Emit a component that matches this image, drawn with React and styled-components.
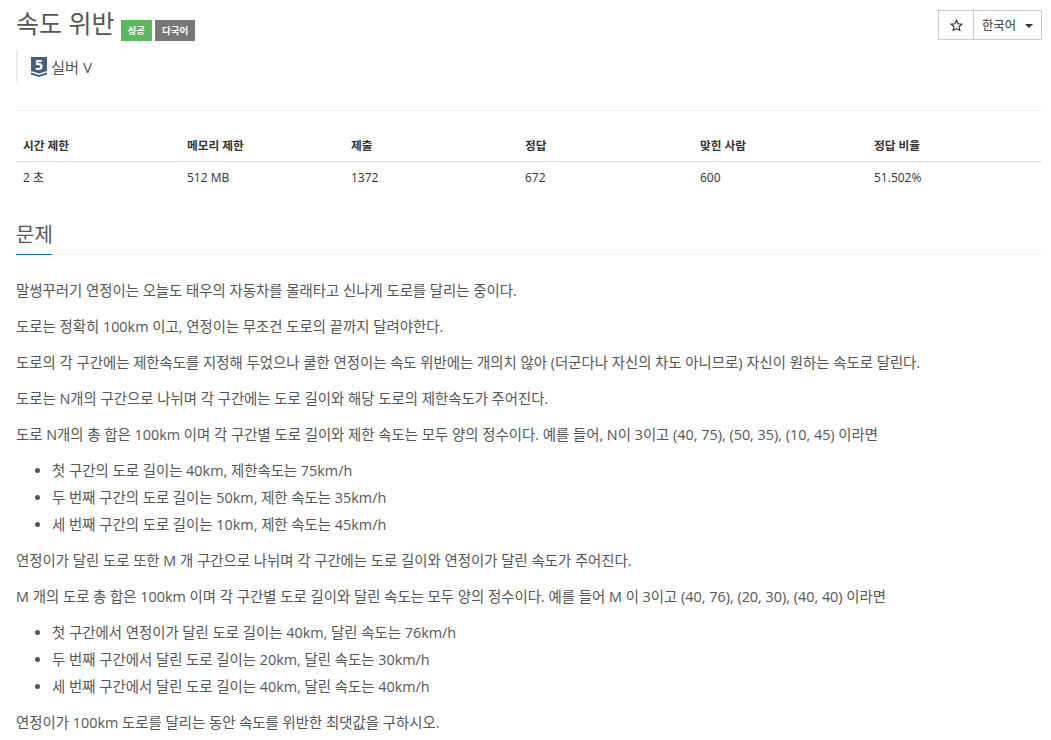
import React from 'react';
import styled, { createGlobalStyle } from 'styled-components';

const Global = createGlobalStyle`
  html, body { margin: 0; padding: 0; background: #fff; height: 740px; overflow: hidden; }
  body { font-family: "Open Sans", "Noto Sans CJK KR", sans-serif; font-size: 13px; color: #333; }
  * { box-sizing: border-box; }
`;
const Page = styled.div`
  padding: 0 9px 0 16px;
  display: flex;
  flex-direction: column;
`;
const Header = styled.header`
  display: flex;
  justify-content: space-between;
  align-items: flex-start;
  height: 111px;
  border-bottom: 1px solid #eee;
`;
const TitleBlock = styled.div`
  display: flex;
  flex-direction: column;
`;
const TitleRow = styled.div`
  display: flex;
  align-items: flex-start;
  height: 50px;
`;
const Title = styled.h1`
  margin: 5px 6px 0 0;
  font-size: 25px;
  line-height: 36px;
  font-weight: 400;
  color: #555;
`;
const Badge = styled.span`
  margin: 20px 3px 0 0;
  height: 21px;
  padding: 0 7px;
  background: ${p => p.$bg};
  color: #fff;
  font-size: 9.5px;
  font-weight: 700;
  line-height: 21px;
`;
const Tier = styled.div`
  display: flex;
  align-items: center;
  gap: 4px;
  height: 34px;
  padding-left: 13px;
  border-left: 2px solid #eee;
  color: #555;
  font-size: 15.3px;
  line-height: 32px;
`;
const Actions = styled.div`
  display: flex;
  margin: 10px 0 0;
  height: 30px;
  border: 1px solid #ccc;
`;
const StarButton = styled.div`
  width: 35px;
  display: flex;
  align-items: center;
  justify-content: center;
  border-right: 1px solid #ccc;
`;
const LangButton = styled.div`
  width: 67px;
  display: flex;
  align-items: center;
  padding-left: 8px;
  gap: 9px;
  font-size: 12.3px;
`;
const Caret = styled.span`
  width: 0;
  height: 0;
  margin-top: 1px;
  border-left: 4px solid transparent;
  border-right: 4px solid transparent;
  border-top: 4px solid #333;
`;
const Stats = styled.table`
  width: 100%;
  margin-top: 17px;
  border-collapse: collapse;
  table-layout: fixed;
  font-size: 11.7px;
`;
const Th = styled.th`
  width: ${p => p.$w}px;
  height: 33px;
  padding: 1px 7px 0;
  text-align: left;
  font-weight: 700;
  color: #333;
  border-bottom: 1px solid #ddd;
`;
const Td = styled.td`
  height: 32px;
  padding: 0 7px;
  font-size: 12px;
`;
const Section = styled.section`
  margin-top: 28px;
`;
const Heading = styled.h2`
  position: relative;
  margin: 0 0 23px;
  height: 34px;
  font-size: 20px;
  line-height: 28px;
  font-weight: 400;
  color: #555;
  border-bottom: 1px dotted #e5e5e5;
  &::after {
    content: "";
    position: absolute;
    left: 0;
    bottom: -1px;
    width: 36px;
    height: 1px;
    background: #0076c0;
  }
`;
const P = styled.p`
  margin: 0 0 10px;
  height: 26px;
  font-size: 14.4px;
  line-height: 26px;
  color: #555;
  white-space: nowrap;
`;
const List = styled.ul`
  margin: -1px 0 10px;
  padding-left: 36px;
`;
const Li = styled.li`
  height: 27px;
  font-size: 14.4px;
  line-height: 27px;
  color: #555;
  white-space: nowrap;
`;

const Shield = () => (
  <svg width="16" height="20" viewBox="0 0 16 20" overflow="visible" aria-hidden="true">
    <path d="M0 0H16V14L8 16.5 0 14Z" fill="#435F7A" />
    <path d="M0 15.5L8 18 16 15.5V17.5L8 20 0 17.5Z" fill="#435F7A" />
    <text x="8" y="12.5" fontSize="14" fontWeight="700" textAnchor="middle" fill="#fff" fontFamily="Open Sans">5</text>
  </svg>
);

const Star = () => (
  <svg width="13" height="13" viewBox="0 0 24 24" fill="none" stroke="#333" strokeWidth="2.2" aria-hidden="true">
    <path d="M12 2.5l2.9 6.3 6.9.8-5.1 4.7 1.4 6.8-6.1-3.4-6.1 3.4 1.4-6.8L2.2 9.6l6.9-.8z" />
  </svg>
);

const widths = [164, 164, 174, 175, 174];
const heads = ['시간 제한', '메모리 제한', '제출', '정답', '맞힌 사람', '정답 비율'];
const vals = ['2 초', '512 MB', '1372', '672', '600', '51.502%'];

export default function App() {
  return (
    <Page>
      <Global />
      <Header>
        <TitleBlock>
          <TitleRow>
            <Title>속도 위반</Title>
            <Badge $bg="#5cb85c">성공</Badge>
            <Badge $bg="#777">다국어</Badge>
          </TitleRow>
          <Tier><Shield />실버 V</Tier>
        </TitleBlock>
        <Actions>
          <StarButton><Star /></StarButton>
          <LangButton>한국어<Caret /></LangButton>
        </Actions>
      </Header>
      <Stats>
        <thead>
          <tr>{heads.map((h, i) => <Th key={h} $w={widths[i]}>{h}</Th>)}</tr>
        </thead>
        <tbody>
          <tr>{vals.map(v => <Td key={v}>{v}</Td>)}</tr>
        </tbody>
      </Stats>
      <Section>
        <Heading>문제</Heading>
        <P>말썽꾸러기 연정이는 오늘도 태우의 자동차를 몰래타고 신나게 도로를 달리는 중이다.</P>
        <P>도로는 정확히 100km 이고, 연정이는 무조건 도로의 끝까지 달려야한다.</P>
        <P>도로의 각 구간에는 제한속도를 지정해 두었으나 쿨한 연정이는 속도 위반에는 개의치 않아 (더군다나 자신의 차도 아니므로) 자신이 원하는 속도로 달린다.</P>
        <P>도로는 N개의 구간으로 나뉘며 각 구간에는 도로 길이와 해당 도로의 제한속도가 주어진다.</P>
        <P>도로 N개의 총 합은 100km 이며 각 구간별 도로 길이와 제한 속도는 모두 양의 정수이다. 예를 들어, N이 3이고 (40, 75), (50, 35), (10, 45) 이라면</P>
        <List>
          <Li>첫 구간의 도로 길이는 40km, 제한속도는 75km/h</Li>
          <Li>두 번째 구간의 도로 길이는 50km, 제한 속도는 35km/h</Li>
          <Li>세 번째 구간의 도로 길이는 10km, 제한 속도는 45km/h</Li>
        </List>
        <P>연정이가 달린 도로 또한 M 개 구간으로 나뉘며 각 구간에는 도로 길이와 연정이가 달린 속도가 주어진다.</P>
        <P>M 개의 도로 총 합은 100km 이며 각 구간별 도로 길이와 달린 속도는 모두 양의 정수이다. 예를 들어 M 이 3이고 (40, 76), (20, 30), (40, 40) 이라면</P>
        <List>
          <Li>첫 구간에서 연정이가 달린 도로 길이는 40km, 달린 속도는 76km/h</Li>
          <Li>두 번째 구간에서 달린 도로 길이는 20km, 달린 속도는 30km/h</Li>
          <Li>세 번째 구간에서 달린 도로 길이는 40km, 달린 속도는 40km/h</Li>
        </List>
        <P>연정이가 100km 도로를 달리는 동안 속도를 위반한 최댓값을 구하시오.</P>
      </Section>
    </Page>
  );
}
